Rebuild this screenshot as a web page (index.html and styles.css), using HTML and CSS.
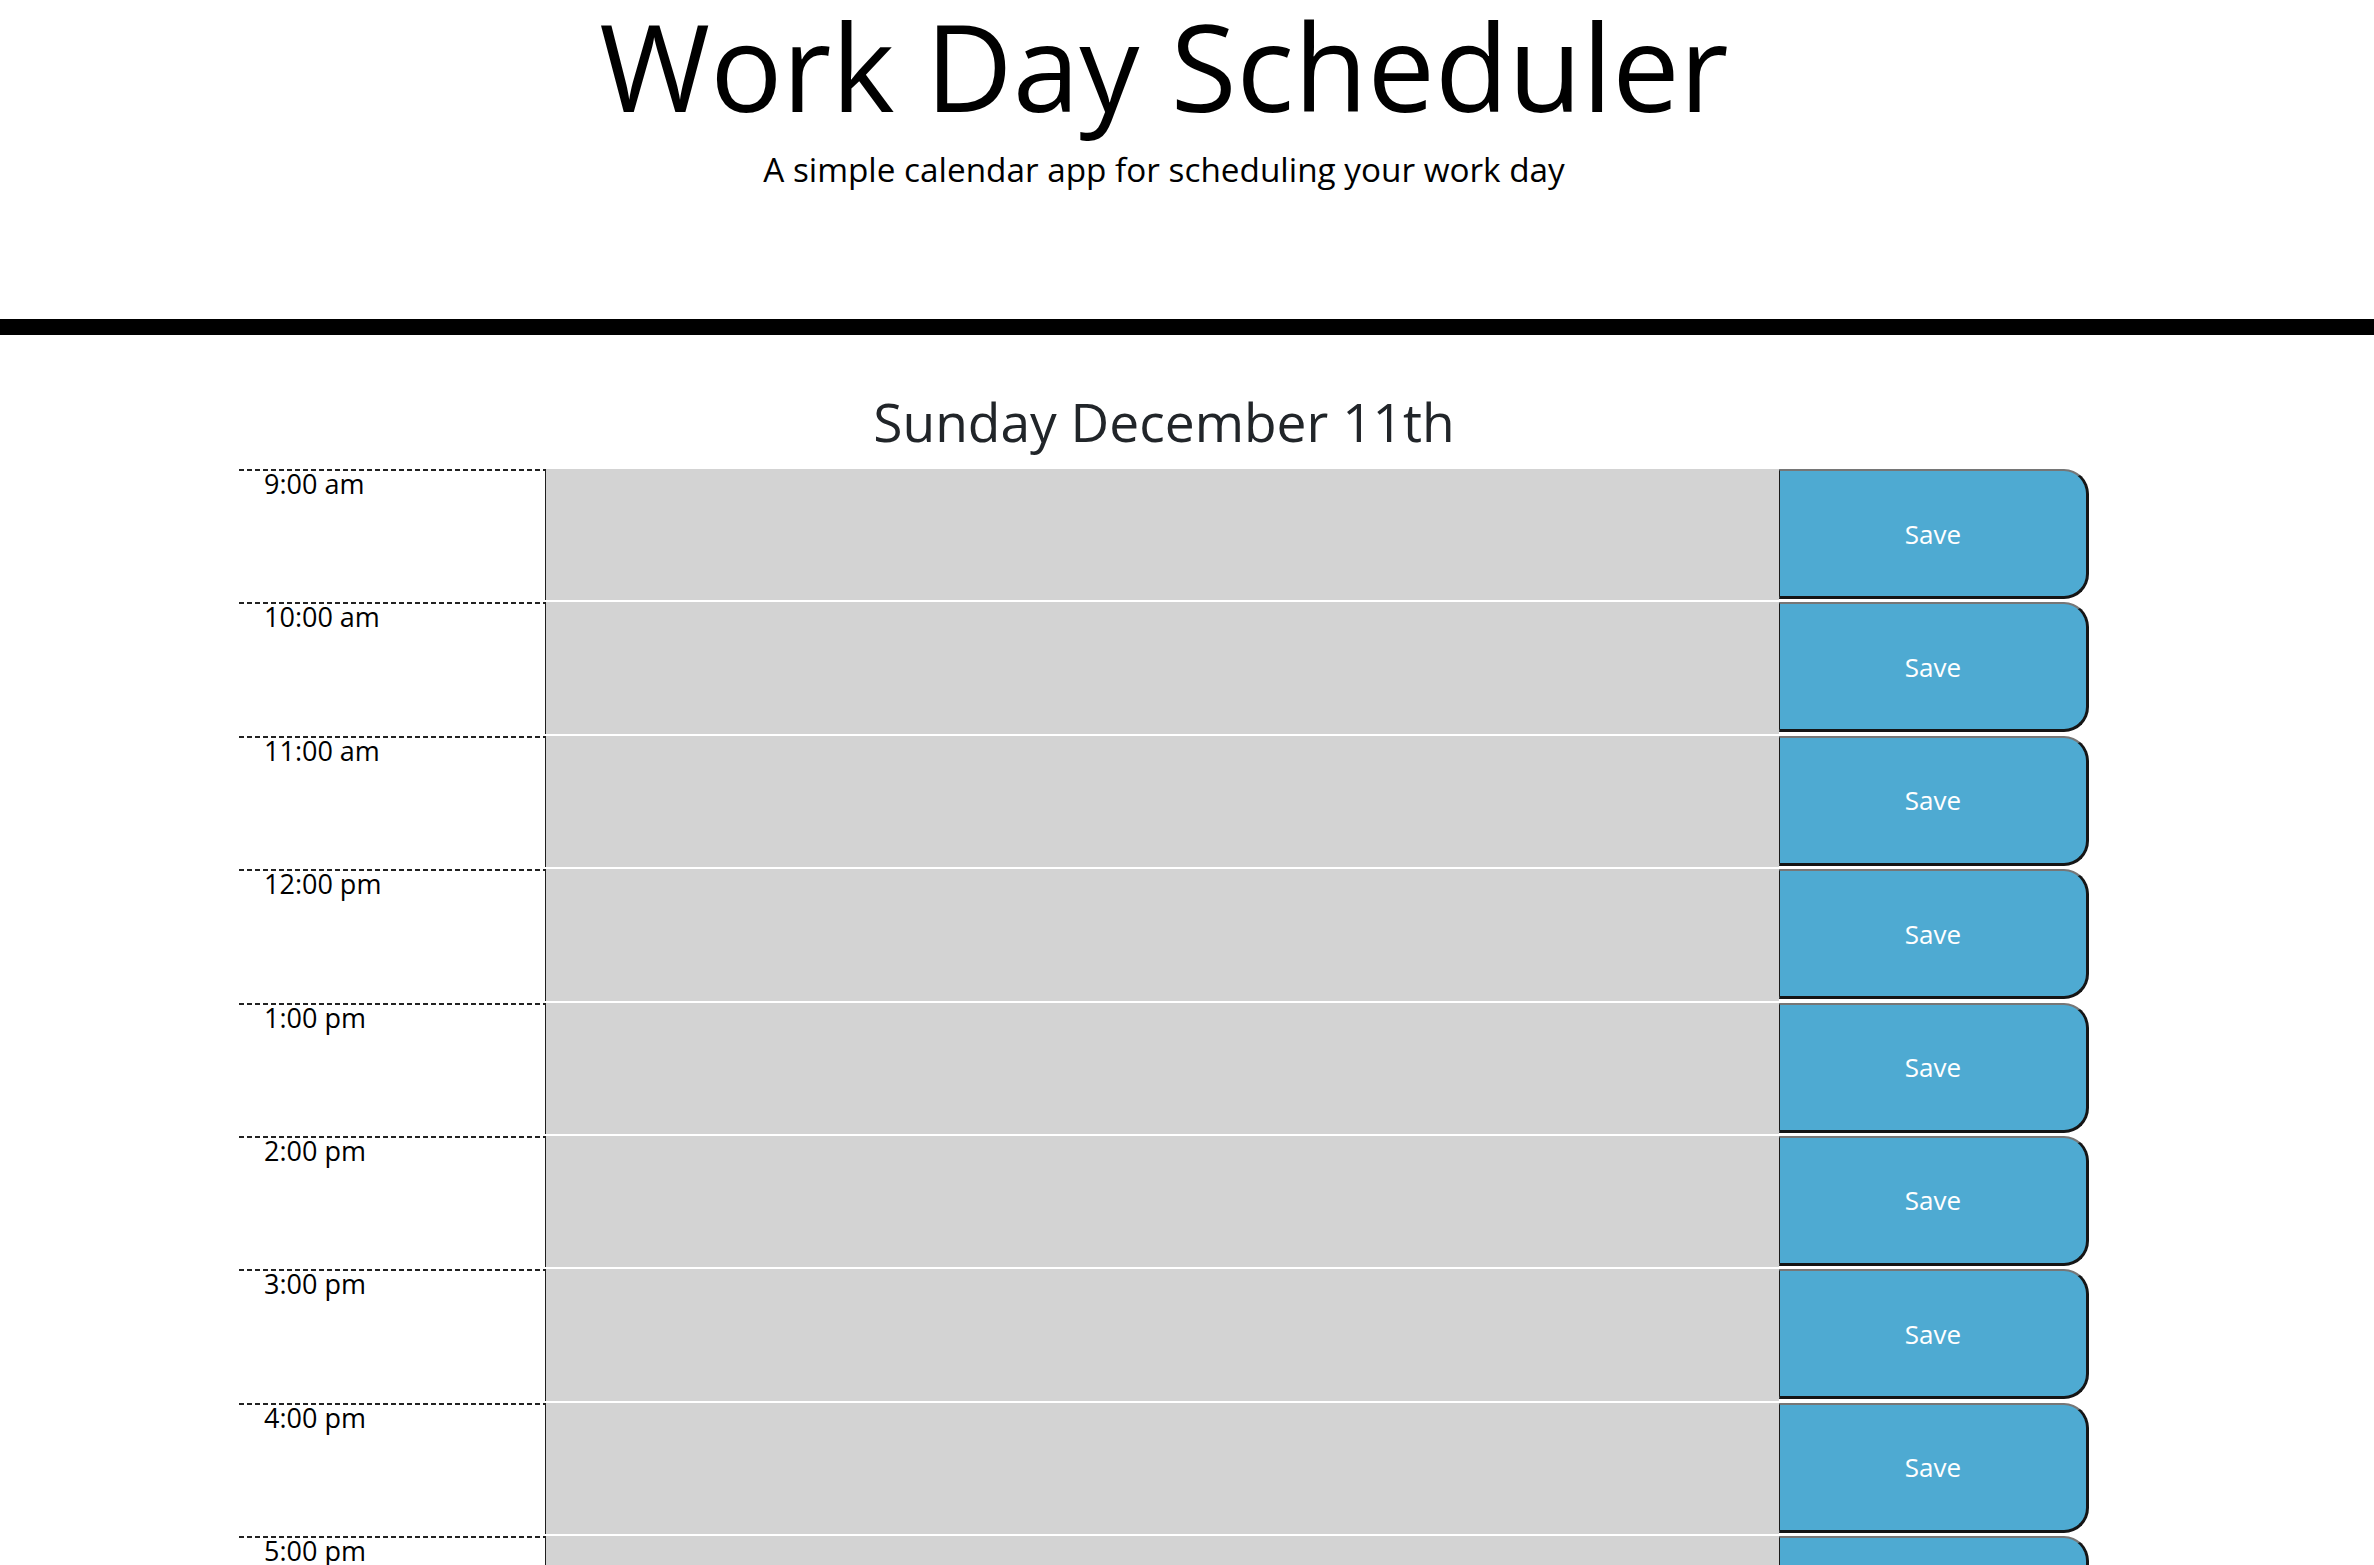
FILE: index.html
```html
<!DOCTYPE html>
<html lang="en">
<head>
<meta charset="utf-8">
<title>Work Day Scheduler</title>
<link rel="stylesheet" href="styles.css">
</head>
<body>
<header class="jumbotron">
  <div class="jumbo-inner">
    <h1 class="display">Work Day Scheduler</h1>
    <p class="lead">A simple calendar app for scheduling your work day</p>
  </div>
</header>
<main class="container">
  <p class="current-day">Sunday December 11th</p>
  <div class="time-block">
    <div class="hour">9:00 am</div>
    <textarea class="description"></textarea>
    <button class="saveBtn">Save</button>
  </div>
  <div class="time-block">
    <div class="hour">10:00 am</div>
    <textarea class="description"></textarea>
    <button class="saveBtn">Save</button>
  </div>
  <div class="time-block">
    <div class="hour">11:00 am</div>
    <textarea class="description"></textarea>
    <button class="saveBtn">Save</button>
  </div>
  <div class="time-block">
    <div class="hour">12:00 pm</div>
    <textarea class="description"></textarea>
    <button class="saveBtn">Save</button>
  </div>
  <div class="time-block">
    <div class="hour">1:00 pm</div>
    <textarea class="description"></textarea>
    <button class="saveBtn">Save</button>
  </div>
  <div class="time-block">
    <div class="hour">2:00 pm</div>
    <textarea class="description"></textarea>
    <button class="saveBtn">Save</button>
  </div>
  <div class="time-block">
    <div class="hour">3:00 pm</div>
    <textarea class="description"></textarea>
    <button class="saveBtn">Save</button>
  </div>
  <div class="time-block">
    <div class="hour">4:00 pm</div>
    <textarea class="description"></textarea>
    <button class="saveBtn">Save</button>
  </div>
  <div class="time-block">
    <div class="hour">5:00 pm</div>
    <textarea class="description"></textarea>
    <button class="saveBtn">Save</button>
  </div>
</main>
</body>
</html>
```

FILE: styles.css
```css
html {
  overflow: hidden;
}

body {
  margin: 0;
  font-family: "Open Sans", "Noto Sans", "Liberation Sans", sans-serif;
  color: #000;
  background: #fff;
}

.jumbotron {
  height: 313px;
  padding-top: 6px;
  border-bottom: 16px solid #000;
}

.jumbo-inner {
  width: 2328px;
  text-align: center;
}

.display {
  margin: 0;
  font-size: 120px;
  line-height: 120px;
  font-weight: 400;
  color: #000;
}

.lead {
  margin: 19px 0 0;
  font-size: 33.3px;
  line-height: 48px;
  color: #000;
}

.container {
  width: 1850px;
  margin-left: 239px;
}

.current-day {
  width: 1850px;
  margin: 46px 0 5px;
  font-size: 53.3px;
  line-height: 81px;
  text-align: center;
  color: #212529;
}

.time-block {
  display: grid;
  grid-template-columns: 306px 1234px 310px;
  height: 133.4px;
  box-sizing: border-box;
  border-top: 2px solid #fff;
}

.hour {
  padding-left: 25px;
  font-size: 27px;
  line-height: 29px;
  color: #000;
  background-image: repeating-linear-gradient(to right, #222 0 5px, transparent 5px 8px);
  background-size: 100% 2px;
  background-repeat: no-repeat;
  background-position: top left;
}

.description {
  display: block;
  margin: 0;
  padding: 10px;
  box-sizing: border-box;
  height: 100%;
  width: 100%;
  background: #d3d3d3;
  border: none;
  border-left: 1px solid #1e1e1e;
  resize: none;
  font-family: inherit;
  font-size: 25px;
}

.saveBtn {
  display: block;
  margin: 0;
  padding: 0;
  height: 130px;
  box-sizing: border-box;
  background: #4eaad2;
  color: #fff;
  font-family: inherit;
  font-size: 26px;
  border-top: 2px solid #767676;
  border-left: 1px solid #1a1a1a;
  border-right: 3px solid #151515;
  border-bottom: 3px solid #151515;
  border-radius: 0 25px 25px 0;
}
```
